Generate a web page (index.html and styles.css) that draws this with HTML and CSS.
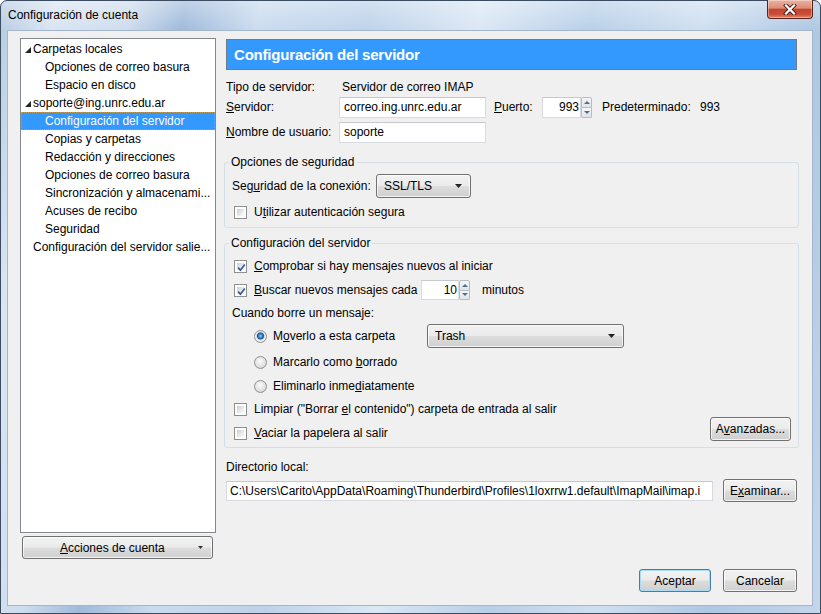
FILE: index.html
```html
<!DOCTYPE html>
<html lang="es">
<head>
<meta charset="utf-8">
<title>Configuración de cuenta</title>
<link rel="stylesheet" href="styles.css">
</head>
<body>
<div class="window">
  <div class="titlebar">
    <span class="title">Configuración de cuenta</span>
    <div class="close">
      <svg width="14" height="11" viewBox="0 0 14 11">
        <path d="M3 1.5 L11 9.5 M11 1.5 L3 9.5" stroke="#4a1c14" stroke-width="4" stroke-linecap="square"/>
        <path d="M3 1.5 L11 9.5 M11 1.5 L3 9.5" stroke="#ffffff" stroke-width="2.2" stroke-linecap="square"/>
      </svg>
    </div>
  </div>
  <div class="client">
    <div class="sidebar">
      <div class="tree">
        <div class="row top"><svg class="twisty" width="6" height="6" viewBox="0 0 6 6"><polygon points="6,0 6,6 0,6" fill="#262626"/></svg>Carpetas locales</div>
        <div class="row child">Opciones de correo basura</div>
        <div class="row child">Espacio en disco</div>
        <div class="row top"><svg class="twisty" width="6" height="6" viewBox="0 0 6 6"><polygon points="6,0 6,6 0,6" fill="#262626"/></svg>soporte@ing.unrc.edu.ar</div>
        <div class="row child selected">Configuración del servidor</div>
        <div class="row child">Copias y carpetas</div>
        <div class="row child">Redacción y direcciones</div>
        <div class="row child">Opciones de correo basura</div>
        <div class="row child">Sincronización y almacenami...</div>
        <div class="row child">Acuses de recibo</div>
        <div class="row child">Seguridad</div>
        <div class="row plain">Configuración del servidor salie...</div>
      </div>
      <div class="btn actions">
        <span><u>A</u>cciones de cuenta</span>
        <svg class="mini-arrow" width="5" height="3" viewBox="0 0 5 3"><polygon points="0,0 5,0 2.5,3" fill="#333"/></svg>
      </div>
    </div>

    <div class="main">
      <div class="header">Configuración del servidor</div>

      <div class="frow r-type">
        <span class="lbl">Tipo de servidor:</span>
        <span class="val">Servidor de correo IMAP</span>
      </div>
      <div class="frow r-server">
        <span class="lbl"><u>S</u>ervidor:</span>
        <span class="text w-server">correo.ing.unrc.edu.ar</span>
        <span class="lbl-port"><u>P</u>uerto:</span>
        <span class="spin-field">
          <span class="text num w-port">993</span>
          <span class="spin"><span class="sb up"></span><span class="sb down"></span></span>
        </span>
        <span class="lbl-def">Predeterminado:</span>
        <span>993</span>
      </div>
      <div class="frow r-user">
        <span class="lbl"><u>N</u>ombre de usuario:</span>
        <span class="text w-server">soporte</span>
      </div>

      <fieldset class="group g-sec">
        <legend>Opciones de seguridad</legend>
        <div class="gbody">
          <div class="frow r-conn">
            <span class="lbl-conn">Seg<u>u</u>ridad de la conexión:</span>
            <span class="btn combo w-ssl"><span>SSL/TLS</span><svg width="7" height="4" viewBox="0 0 7 4"><polygon points="0,0 7,0 3.5,4" fill="#222"/></svg></span>
          </div>
          <div class="frow r-auth check">
            <span class="cb"></span>
            <span>U<u>t</u>ilizar autenticación segura</span>
          </div>
        </div>
      </fieldset>

      <fieldset class="group g-srv">
        <legend>Configuración del servidor</legend>
        <div class="gbody">
          <div class="frow r-check1 check">
            <span class="cb on"><svg width="9" height="9" viewBox="0 0 9 9"><path d="M1.2 4.6 L3.4 7.2 L7.8 1.4" stroke="#3d5494" stroke-width="1.7" fill="none"/></svg></span>
            <span><u>C</u>omprobar si hay mensajes nuevos al iniciar</span>
          </div>
          <div class="frow r-check2 check">
            <span class="cb on"><svg width="9" height="9" viewBox="0 0 9 9"><path d="M1.2 4.6 L3.4 7.2 L7.8 1.4" stroke="#3d5494" stroke-width="1.7" fill="none"/></svg></span>
            <span class="lbl-buscar"><u>B</u>uscar nuevos mensajes cada</span>
            <span class="spin-field">
              <span class="text num w-min">10</span>
              <span class="spin"><span class="sb up"></span><span class="sb down"></span></span>
            </span>
            <span class="minutos">minutos</span>
          </div>
          <div class="frow r-when">
            <span>Cuando borre un mensaje:</span>
          </div>
          <div class="frow r-move radio">
            <span class="rb on"></span>
            <span class="lbl-move">M<u>o</u>verlo a esta carpeta</span>
            <span class="btn combo w-trash"><span>Trash</span><svg width="7" height="4" viewBox="0 0 7 4"><polygon points="0,0 7,0 3.5,4" fill="#222"/></svg></span>
          </div>
          <div class="frow r-mark radio">
            <span class="rb"></span>
            <span>Marcarlo como <u>b</u>orrado</span>
          </div>
          <div class="frow r-del radio">
            <span class="rb"></span>
            <span>Eliminarlo inme<u>d</u>iatamente</span>
          </div>
          <div class="lastblock">
            <div class="lastchecks">
              <div class="frow check">
                <span class="cb"></span>
                <span>Limpiar ("Borrar <u>e</u>l contenido") carpeta de entrada al salir</span>
              </div>
              <div class="frow check r-empty">
                <span class="cb"></span>
                <span><u>V</u>aciar la papelera al salir</span>
              </div>
            </div>
            <span class="btn push w-adv">A<u>v</u>anzadas...</span>
          </div>
        </div>
      </fieldset>

      <div class="frow r-dirlbl"><span>Directorio local:</span></div>
      <div class="frow r-dir">
        <span class="text w-path">C:\Users\Carito\AppData\Roaming\Thunderbird\Profiles\1loxrrw1.default\ImapMail\imap.i</span>
        <span class="btn push w-browse">E<u>x</u>aminar...</span>
      </div>

      <div class="dlgbuttons">
        <span class="btn push default w-ok">Aceptar</span>
        <span class="btn push w-cancel">Cancelar</span>
      </div>
    </div>
  </div>
</div>
</body>
</html>
```

FILE: styles.css
```css
* { box-sizing: border-box; }
html, body { margin: 0; padding: 0; }
body {
  width: 821px;
  height: 614px;
  overflow: hidden;
  font-family: "Liberation Sans", Arial, sans-serif;
  font-size: 12px;
  color: #000;
  background: #ffffff;
}
u { text-decoration: underline; text-underline-offset: 1px; }

.window {
  width: 821px;
  height: 614px;
  border: 1px solid #3b4c60;
  border-radius: 7px 7px 0 0;
  background:
    linear-gradient(to bottom, rgba(255,255,255,0.35), rgba(255,255,255,0) 30px),
    linear-gradient(100deg, #b6cbe2 0%, #d9e5f2 6%, #cddcee 14%, #9fbadb 20%, #c9dbee 28%, #bdd2ea 40%, #dbe7f4 52%, #b8cfe8 64%, #cfdff0 76%, #aec7e3 88%, #c3d6ec 100%);
  display: flex;
  flex-direction: column;
}

.titlebar {
  height: 29px;
  display: flex;
  justify-content: space-between;
  align-items: flex-start;
}
.title {
  padding-left: 7px;
  line-height: 29px;
  font-size: 12px;
  color: #000;
}
.close {
  width: 46px;
  height: 19px;
  margin-top: -1px;
  margin-right: 7px;
  border: 1px solid #5a2318;
  border-top: none;
  border-radius: 0 0 4px 4px;
  background: linear-gradient(to bottom, #ecb3a3 0%, #dc8c77 45%, #c5432c 52%, #c9503a 80%, #e0876e 100%);
  box-shadow: inset 0 0 0 1px rgba(255,255,255,0.35);
  display: flex;
  align-items: center;
  justify-content: center;
}

.client {
  margin-left: 6px;
  width: 806px;
  height: 576px;
  border: 1px solid #a4b6cb;
  background: #f0f0f0;
  display: flex;
  padding: 7px 15px 13px 12px;
  gap: 10px;
}

/* sidebar */
.sidebar {
  width: 196px;
  display: flex;
  flex-direction: column;
}
.tree {
  height: 495px;
  background: #fff;
  border: 1px solid #828790;
  padding-top: 1px;
}
.row {
  height: 18px;
  line-height: 18px;
  white-space: nowrap;
  display: flex;
  align-items: center;
}
.row.top { padding-left: 4px; }
.row.top .twisty { margin-right: 2px; margin-top: 2px; }
.row.child { padding-left: 24px; }
.row.plain { padding-left: 12px; }
.row.selected {
  background: #3399ff;
  color: #fff;
  border: 1px dotted #b89a5c;
  padding-left: 23px;
}

.btn {
  border: 1px solid #707070;
  border-radius: 3px;
  background: linear-gradient(to bottom, #f2f2f2 0%, #ebebeb 48%, #dddddd 52%, #cfcfcf 100%);
  box-shadow: inset 0 0 0 1px rgba(255,255,255,0.75);
  display: flex;
  align-items: center;
  white-space: nowrap;
}
.actions {
  margin-top: 3px;
  margin-left: 2px;
  width: 191px;
  height: 23px;
  padding-left: 37px;
  padding-right: 9px;
  justify-content: space-between;
}

/* main */
.main {
  width: 571px;
  display: flex;
  flex-direction: column;
  padding-top: 1px;
}
.header {
  height: 31px;
  background: #3399ff;
  border: 1px solid #6e7b88;
  color: #fff;
  font-weight: bold;
  font-size: 15px;
  letter-spacing: -0.2px;
  line-height: 29px;
  padding-left: 7px;
}

.frow {
  display: flex;
  align-items: center;
  white-space: nowrap;
}
.lbl { width: 113px; }
.val { padding-left: 3px; }
.r-type { margin-top: 8px; height: 18px; }
.r-server { height: 22px; }
.r-user { margin-top: 3px; height: 22px; }

.text {
  height: 21px;
  background: #fff;
  border: 1px solid #d7dade;
  border-top-color: #c5c9ce;
  padding-left: 4px;
  line-height: 19px;
  overflow: hidden;
  white-space: nowrap;
}
.w-server { width: 147px; }
.lbl-port { margin-left: 8px; width: 48px; }
.spin-field { display: flex; align-items: stretch; }
.num { text-align: right; padding-left: 0; padding-right: 1px; }
.w-port { width: 39px; }
.spin {
  width: 11px;
  display: flex;
  flex-direction: column;
}
.sb {
  flex: 1;
  border: 1px solid #b4bcc6;
  background: linear-gradient(to bottom, #f6f6f6, #dfe3e8);
  display: flex;
  align-items: center;
  justify-content: center;
}
.sb.up { border-radius: 2px 2px 0 0; }
.sb.down { border-radius: 0 0 2px 2px; border-top: none; }
.sb::before {
  content: "";
  border-left: 3px solid transparent;
  border-right: 3px solid transparent;
}
.sb.up::before { border-bottom: 3px solid #4f6e96; }
.sb.down::before { border-top: 3px solid #4f6e96; }
.lbl-def { margin-left: 10px; width: 98px; }

/* group boxes */
.group {
  margin: 12px -2px 0 -2px;
  padding: 0;
  border: 1px solid #d5dfe5;
  border-radius: 3px;
  min-width: 0;
}
.group legend {
  margin-left: 4px;
  padding: 0 2px;
  line-height: 15px;
  height: 15px;
}
.gbody { padding: 0 7px 6px 7px; }
.check .cb { margin-left: 2px; margin-right: 7px; }

.r-conn { margin-top: 4px; height: 24px; }
.lbl-conn { width: 144px; }
.combo {
  height: 24px;
  justify-content: space-between;
  padding: 0 8px 0 7px;
}
.w-ssl { width: 95px; }
.r-auth { margin-top: 5px; height: 18px; }

.g-srv { margin-top: 8px; }
.g-srv .gbody { padding-bottom: 5px; }
.r-check1 { margin-top: 6px; height: 18px; }
.r-check2 { margin-top: 5px; height: 20px; }
.lbl-buscar { width: 167px; }
.w-min { width: 38px; height: 20px; line-height: 18px; }
.r-check2 .spin { height: 20px; }
.minutos { margin-left: 12px; }
.r-when { margin-top: 4px; height: 18px; }
.r-move { margin-top: 2px; height: 24px; }
.r-mark { margin-top: 5px; height: 18px; }
.r-del { margin-top: 6px; height: 18px; }
.radio .rb { margin-left: 22px; margin-right: 6px; }
.lbl-move { width: 154px; }
.w-trash { width: 197px; height: 24px; }

.cb {
  width: 13px;
  height: 13px;
  border: 1px solid #8e8f8f;
  padding: 2px;
  background: linear-gradient(135deg, #c9ced4 0%, #eef0f2 70%, #fafafa 100%) content-box, #fff;
  display: inline-flex;
  flex: none;
}
.cb.on svg { display: block; overflow: visible; }

.rb {
  width: 13px;
  height: 13px;
  border-radius: 50%;
  border: 1px solid #8e9094;
  background: radial-gradient(circle at 45% 40%, #fdfdfd 0%, #e6e6e6 45%, #c9cbce 100%);
  flex: none;
}
.rb.on {
  background: radial-gradient(circle at 50% 45%, #9fdcff 0px, #3590d8 1.6px, #1c5597 3.2px, #c9d0d8 3.8px, #f2f2f2 5px, #d6d8da 100%);
}

.lastblock {
  margin-top: 5px;
  display: flex;
  justify-content: space-between;
}
.lastchecks .frow { height: 18px; }
.lastchecks .r-empty { margin-top: 6px; }
.push {
  height: 24px;
  justify-content: center;
}
.w-adv { width: 81px; align-self: flex-end; margin-bottom: 1px; }

.r-dirlbl { margin-top: 10px; height: 18px; }
.r-dir { margin-top: 3px; height: 23px; gap: 10px; }
.w-path { width: 487px; height: 20px; line-height: 18px; padding-left: 3px; }
.w-browse { width: 74px; height: 23px; }

.dlgbuttons {
  margin-top: auto;
  display: flex;
  justify-content: flex-end;
  gap: 12px;
}
.w-ok { width: 72px; height: 23px; }
.w-cancel { width: 74px; height: 23px; }
.default {
  border-color: #3c7fb1;
  box-shadow: inset 0 0 0 1px #a8dcf6;
}
```
